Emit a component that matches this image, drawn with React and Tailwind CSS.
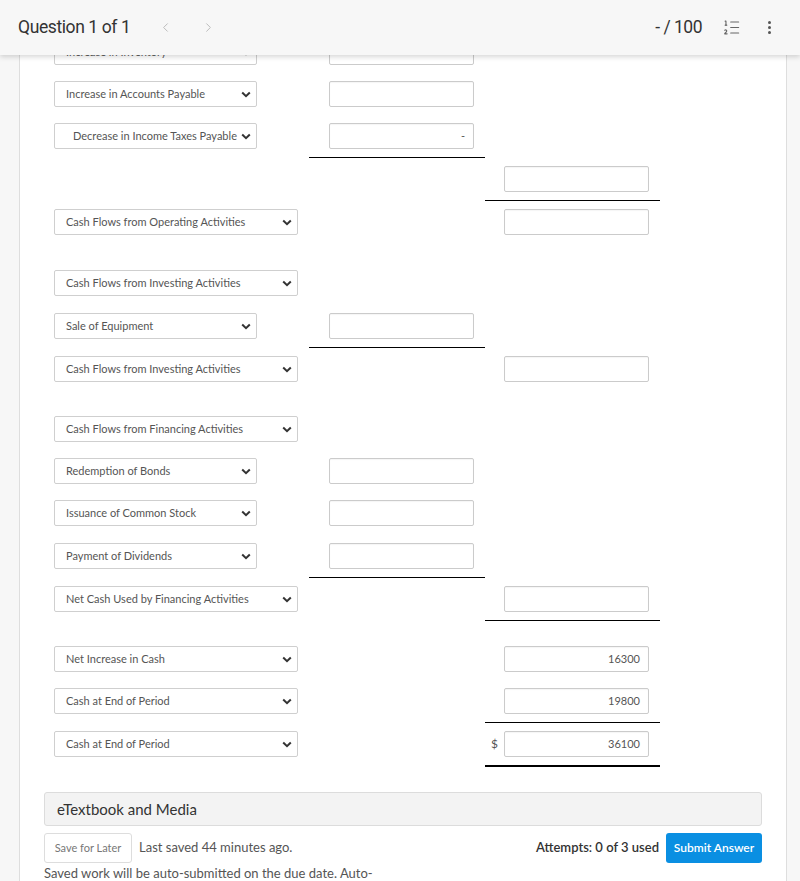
import { ChevronLeft, ChevronRight, ListOrdered } from 'lucide-react';

const rows = [
  { type: 'row', label: 'Increase in Inventory', mid: '' },
  { type: 'row', label: 'Increase in Accounts Payable', mid: '' },
  { type: 'row', label: 'Decrease in Income Taxes Payable', mid: '-', indent: true },
  { type: 'line', col: 'mid' },
  { type: 'row', right: '' },
  { type: 'line', col: 'right' },
  { type: 'row', label: 'Cash Flows from Operating Activities', wide: true, right: '' },
  { type: 'gap', h: 'h-[19px]' },
  { type: 'row', label: 'Cash Flows from Investing Activities', wide: true },
  { type: 'gap', h: 'h-px' },
  { type: 'row', label: 'Sale of Equipment', mid: '' },
  { type: 'line', col: 'mid' },
  { type: 'row', label: 'Cash Flows from Investing Activities', wide: true, right: '' },
  { type: 'gap', h: 'h-[18px]' },
  { type: 'row', label: 'Cash Flows from Financing Activities', wide: true },
  { type: 'row', label: 'Redemption of Bonds', mid: '' },
  { type: 'row', label: 'Issuance of Common Stock', mid: '' },
  { type: 'gap', h: 'h-px' },
  { type: 'row', label: 'Payment of Dividends', mid: '' },
  { type: 'line', col: 'mid' },
  { type: 'row', label: 'Net Cash Used by Financing Activities', wide: true, right: '' },
  { type: 'line', col: 'right' },
  { type: 'gap', h: 'h-[17px]' },
  { type: 'row', label: 'Net Increase in Cash', wide: true, right: '16300' },
  { type: 'row', label: 'Cash at End of Period', wide: true, right: '19800' },
  { type: 'line', col: 'right' },
  { type: 'row', label: 'Cash at End of Period', wide: true, right: '36100', dollar: true },
  { type: 'line', col: 'right', thick: true },
];

function Chevron() {
  return (
    <svg width="10" height="7" viewBox="0 0 10 7" className="shrink-0">
      <path d="M1.2 1.5L5 5.2L8.8 1.5" fill="none" stroke="#333" strokeWidth="2" />
    </svg>
  );
}

function SelectBox({ label, wide, indent }) {
  return (
    <div
      className={`h-[26px] ${wide ? 'w-[244px]' : 'w-[203px]'} border border-[#cfcfcf] rounded-[2px] bg-white flex items-center justify-between ${indent ? 'pl-[18px]' : 'pl-[11px]'} pr-[5px] text-[11px] text-[#555]`}
    >
      <span className="whitespace-nowrap">{label}</span>
      <Chevron />
    </div>
  );
}

function InputBox({ value }) {
  return (
    <div className="h-[26px] w-[145px] border border-[#cbcbcb] rounded-[2px] bg-white shadow-[inset_0_1px_1px_rgba(0,0,0,0.04)] flex items-center justify-end pr-[8px] text-[11px] text-[#555]">
      {value}
    </div>
  );
}

function Row({ row }) {
  return (
    <div className="grid grid-cols-[265px_176px_175px] py-2">
      <div className="pl-[10px] h-[26px]">
        {row.label && <SelectBox label={row.label} wide={row.wide} indent={row.indent} />}
      </div>
      <div className="pl-[20px]">{row.mid !== undefined && <InputBox value={row.mid} />}</div>
      <div className="flex items-center">
        <div className="w-[19px] text-[12px] text-[#555] pl-[6px]">{row.dollar ? '$' : ''}</div>
        {row.right !== undefined && <InputBox value={row.right} />}
      </div>
    </div>
  );
}

function Rule({ row }) {
  return (
    <div className="grid grid-cols-[265px_176px_175px]">
      <div />
      <div className={row.col === 'mid' ? 'h-px bg-black' : ''} />
      <div className={row.col === 'right' ? (row.thick ? 'h-[2px] bg-black' : 'h-px bg-black') : ''} />
    </div>
  );
}

export default function App() {
  return (
    <div className="relative min-h-screen bg-[#f7f7f7] font-['Lato',sans-serif] text-[#333]">
      {/* top bar lies over the scrolled worksheet */}
      <div className="absolute top-0 left-0 right-0 z-10 h-[55px] bg-[#f7f7f7] shadow-[0_2px_5px_rgba(0,0,0,0.16)] flex items-center pl-[18px] pr-[29px] font-['Roboto',sans-serif]">
        <span className="text-[17.5px] text-[#333] tracking-[-0.4px]">Question 1 of 1</span>
        <ChevronLeft size={15} strokeWidth={1.5} className="ml-[28px] text-[#b8b8b8]" />
        <ChevronRight size={15} strokeWidth={1.5} className="ml-[28px] text-[#b8b8b8]" />
        <span className="ml-auto text-[17.5px] text-[#333] tracking-[-0.5px]">- / 100</span>
        <ListOrdered size={19} strokeWidth={1.4} className="ml-[20px] text-[#666]" />
        <div className="ml-[27px] flex flex-col gap-[2px]">
          <span className="w-[3px] h-[3px] rounded-full bg-[#555]" />
          <span className="w-[3px] h-[3px] rounded-full bg-[#555]" />
          <span className="w-[3px] h-[3px] rounded-full bg-[#555]" />
        </div>
      </div>

      <div className="ml-[19px] mr-[13px] min-h-screen border-x border-[#dedede] bg-white px-6 pt-[31px]">
        {rows.map((row, i) => {
          if (row.type === 'row') return <Row key={i} row={row} />;
          if (row.type === 'line') return <Rule key={i} row={row} />;
          return <div key={i} className={row.h} />;
        })}

        <div className="mt-[25px] h-[34px] border border-[#dcdcdc] rounded-[3px] bg-[#f3f3f3] flex items-center pl-[12px] text-[15px] text-[#333]">
          eTextbook and Media
        </div>

        <div className="mt-[7px] flex items-center justify-between">
          <div className="flex items-center">
            <button className="h-[30px] w-[88px] border border-[#ddd] rounded-[3px] bg-white text-[11px] text-[#777]">
              Save for Later
            </button>
            <span className="ml-[7px] text-[13px] text-[#555]">Last saved 44 minutes ago.</span>
          </div>
          <div className="flex items-center">
            <span className="text-[13px] font-semibold text-[#333]">Attempts: 0 of 3 used</span>
            <button className="ml-[7px] h-[30px] w-[96px] rounded-[3px] bg-[#0a8fe2] text-[12px] font-semibold text-white">
              Submit Answer
            </button>
          </div>
        </div>
        <p className="mt-px text-[13px] leading-[18px] text-[#555]">
          Saved work will be auto-submitted on the due date. Auto-
        </p>
      </div>
    </div>
  );
}
